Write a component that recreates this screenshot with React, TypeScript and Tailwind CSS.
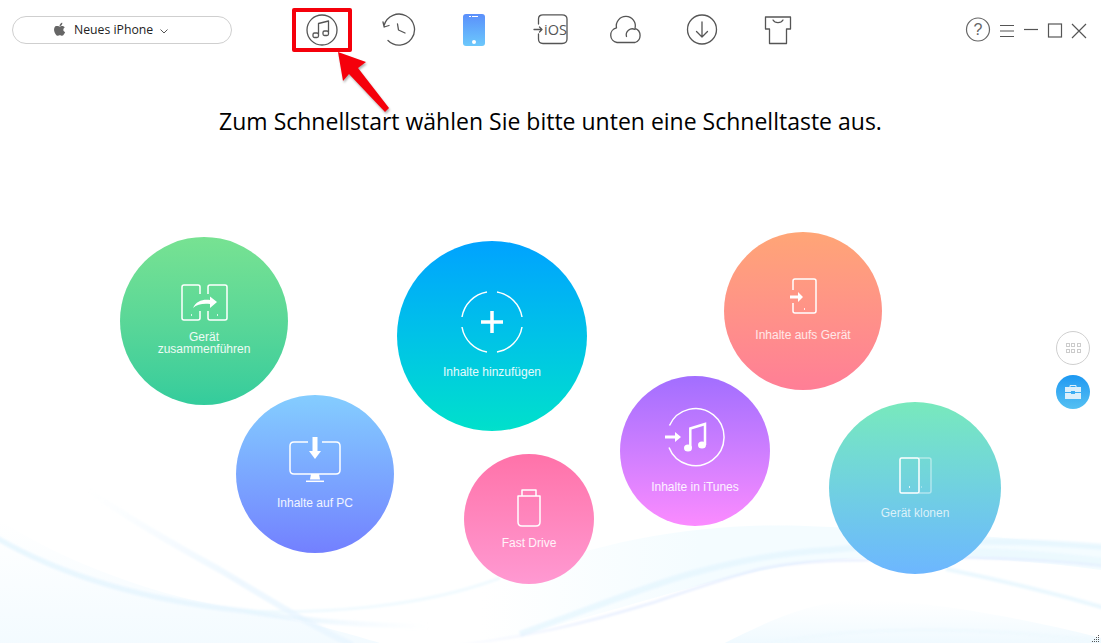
import type { ReactNode } from "react";

const font = "font-['Open_Sans','Liberation_Sans',sans-serif]";

function Waves() {
  return (
    <svg className="absolute bottom-0 left-0" width="1101" height="163" viewBox="0 480 1101 163" fill="none">
      <defs>
        <linearGradient id="fadeL" x1="0" y1="0" x2="1" y2="0">
          <stop offset="0" stopColor="#dff3fd" />
          <stop offset="0.7" stopColor="#e3f3fd" />
          <stop offset="1" stopColor="#e9f6fe" stopOpacity="0" />
        </linearGradient>
        <linearGradient id="fadeR" gradientUnits="userSpaceOnUse" x1="88" y1="490" x2="240" y2="590">
          <stop offset="0" stopColor="#e6f4fe" stopOpacity="0" />
          <stop offset="1" stopColor="#e6f4fe" />
        </linearGradient>
        <linearGradient id="fadeB" x1="0" y1="0" x2="0" y2="1">
          <stop offset="0" stopColor="#f0faff" stopOpacity="0" />
          <stop offset="1" stopColor="#eef9ff" />
        </linearGradient>
        <linearGradient id="fadeM" gradientUnits="userSpaceOnUse" x1="480" y1="0" x2="700" y2="0">
          <stop offset="0" stopColor="#f4fcff" stopOpacity="0" />
          <stop offset="1" stopColor="#f4fcff" />
        </linearGradient>
        <linearGradient id="fadeS" gradientUnits="userSpaceOnUse" x1="430" y1="0" x2="620" y2="0">
          <stop offset="0" stopColor="#dfe9fe" stopOpacity="0" />
          <stop offset="1" stopColor="#dfe9fe" />
        </linearGradient>
        <filter id="soft">
          <feGaussianBlur stdDeviation="0.800" />
        </filter>
      </defs>
      {/* pale washes */}
      <path d="M0 520 C60 560 160 600 260 612 C320 625 370 640 380 643 L0 643Z" fill="url(#fadeB)" opacity="0.700" />
      <path d="M480 590 C600 535 720 520 830 527 C930 530 1020 540 1101 546 L1101 570 C1000 556 900 555 830 560 C720 570 600 620 480 643Z" fill="url(#fadeM)" />
      <path d="M715 648 C760 625 800 605 850 600 C900 598 1000 612 1101 638 L1101 643 L715 643Z" fill="url(#fadeB)" />
      <g filter="url(#soft)">
        {/* left ribbons */}
        <path d="M-5 537 C60 575 140 600 245 611 C300 620 360 626 430 626" stroke="url(#fadeL)" strokeWidth="5" opacity="0.700" />
        <path d="M245 611 C320 614 420 608 500 578" stroke="#e6f6fe" strokeWidth="3" opacity="0.600" />
        <path d="M88 490 C130 520 180 548 220 570 C270 600 310 625 352 645" stroke="url(#fadeR)" strokeWidth="6" opacity="0.700" />
        {/* right ribbons */}
        <path d="M520 634 C600 605 650 585 690 574 C740 560 790 552 830 550 C900 543 990 537 1105 547" stroke="#e3f5fe" strokeWidth="6" opacity="0.700" />
        <path d="M430 648 C520 640 590 622 655 602 C690 590 725 578 760 569 C800 561 840 560 866 560 C920 556 1020 556 1105 566" stroke="url(#fadeS)" strokeWidth="2.500" opacity="0.700" />
        <path d="M946 569 C1000 580 1060 595 1105 608" stroke="#e6f6fe" strokeWidth="4" opacity="0.800" />
        <path d="M970 552 C1020 553 1070 558 1105 562" stroke="#e6f6fe" strokeWidth="8" opacity="0.600" />
        <path d="M760 646 C840 627 960 624 1105 642" stroke="#eff9fe" strokeWidth="3" />
      </g>
    </svg>
  );
}

function Tool({ children, on }: { children: ReactNode; on?: boolean }) {
  return (
    <div className={"flex h-[44px] w-[60px] items-center justify-center rounded-[2px] " + (on ? "border-4 border-[#f5000b]" : "")}>
      {children}
    </div>
  );
}

const ic = { fill: "none", stroke: "#555", strokeWidth: 1.3, strokeLinecap: "round", strokeLinejoin: "round" } as const;

function Toolbar() {
  return (
    <div className="flex gap-[16px]">
      <Tool on>
        <svg width="34" height="34" viewBox="0 0 34 34" {...ic}>
          <circle cx="17" cy="17" r="15" />
          <path d="M13.500 21V10.500L23.500 8V19" />
          <rect x="8" y="20" width="5.500" height="4.500" rx="1.500" />
          <rect x="18" y="18" width="5.500" height="4.500" rx="1.500" />
        </svg>
      </Tool>
      <Tool>
        <svg width="36" height="36" viewBox="0 0 36 36" {...ic}>
          <path d="M4.200 13A15.500 15.500 0 1 1 8 28.500" />
          <path d="M3 10L4.200 15L9 13.500" />
          <path d="M17.500 12L18.500 18L25 21" />
        </svg>
      </Tool>
      <Tool>
        <div className="relative h-[32px] w-[22px] rounded-[3px] bg-gradient-to-b from-[#5b8ffb] to-[#6cc8fb]">
          <div className="absolute top-[2px] left-[6px] h-[1.500px] w-[2px] bg-white" />
          <div className="absolute top-[2px] left-[9px] h-[1.500px] w-[6px] bg-white" />
          <div className="absolute bottom-[2px] left-[9px] h-[4px] w-[4px] rounded-full bg-white" />
        </div>
      </Tool>
      <Tool>
        <svg width="36" height="32" viewBox="0 0 36 32" {...ic}>
          <path d="M6.500 10V5Q6.500 .8 11 .8H30Q35 .8 35 5V25Q35 29.500 30 29.500H11Q6.500 29.500 6.500 25V20" />
          <path d="M2 15.500H10M7.500 13L10 15.500L7.500 18" />
          <text x="12" y="20.500" fontSize="14.500" fill="#555" stroke="none" fontFamily="Open Sans, sans-serif">iOS</text>
        </svg>
      </Tool>
      <Tool>
        <svg width="34" height="30" viewBox="0 0 34 30" {...ic}>
          <path d="M8 27.500A7.500 7.500 0 0 1 7.500 12.800A9.500 9.500 0 1 1 26 13.300A7.500 7.500 0 0 1 26 27.500Z" />
          <path d="M17.500 21.500A6 6 0 0 1 26 14.500" />
        </svg>
      </Tool>
      <Tool>
        <svg width="32" height="32" viewBox="0 0 32 32" {...ic}>
          <circle cx="16" cy="15.500" r="14.500" />
          <path d="M16 8V23M10.500 17.500L16 23L21.500 17.500" />
        </svg>
      </Tool>
      <Tool>
        <svg width="28" height="30" viewBox="0 0 28 30" {...ic}>
          <path d="M1.500 2H26.500V14H22.500V28.500H5.500V14H1.500Z" />
          <path d="M9 5C11 8.500 17 8.500 19 5" />
        </svg>
      </Tool>
    </div>
  );
}

function WindowButtons() {
  return (
    <svg width="122" height="28" viewBox="0 0 122 28" fill="none" stroke="#555" strokeWidth="1.200">
      <circle cx="13" cy="13.500" r="11.500" stroke="#666" />
      <text x="13" y="19" textAnchor="middle" fontSize="16" fill="#666" stroke="none" fontFamily="Liberation Sans, sans-serif">?</text>
      <path d="M35 9.500H49M35 15H49M35 20.500H49" />
      <path d="M59 13.500H73" />
      <rect x="83.500" y="8" width="13" height="13" />
      <path d="M107 8L121 22M121 8L107 22" />
    </svg>
  );
}

type BubbleProps = {
  cls: string;
  text: string[];
  icon: ReactNode;
  pad: string;
  gap: string;
  tone?: string;
};

function Bubble({ cls, text, icon, pad, gap, tone = "text-white/90" }: BubbleProps) {
  return (
    <div className={"absolute flex flex-col items-center rounded-full bg-gradient-to-b " + cls + " " + pad}>
      {icon}
      <div className={"text-center font-['Liberation_Sans',sans-serif] text-[12px] leading-[12px] " + gap + " " + tone}>
        {text.map((t) => (
          <div key={t}>{t}</div>
        ))}
      </div>
    </div>
  );
}

const w = { fill: "none", stroke: "#fff", strokeWidth: 1.500, strokeLinejoin: "round" } as const;

export default function App() {
  return (
    <div className={`relative h-[643px] w-[1101px] overflow-hidden bg-white ${font}`}>
      <Waves />

      <div className="relative flex h-[59px] items-center">
        <div className="ml-[12px] flex h-[28px] w-[220px] items-center rounded-full border border-[#cfcfcf] pt-[2px] pl-[39px] text-[12.250px] text-[#222]">
          <svg width="14" height="15" viewBox="0 0 14 16" fill="#666" className="mr-[8px] mb-[2px]">
            <path d="M11.600 8.500c0-1.800 1.500-2.700 1.600-2.800-.9-1.300-2.200-1.500-2.700-1.500-1.100-.1-2.200.7-2.800.7-.6 0-1.500-.7-2.400-.6C4 3.800 2.900 4.500 2.300 5.500 1 7.700 2 11 3.200 12.800c.6.900 1.300 1.900 2.300 1.800.9 0 1.300-.6 2.400-.6s1.400.6 2.400.6 1.600-.9 2.200-1.800c.7-1 1-2 1-2.100 0 0-1.900-.7-1.900-2.200zM9.800 3.100c.5-.6.900-1.500.8-2.300-.8 0-1.700.5-2.200 1.200-.5.500-.9 1.400-.8 2.200.8.100 1.700-.4 2.200-1.100z" />
          </svg>
          <span>Neues iPhone</span>
          <svg width="8" height="5" viewBox="0 0 8 5" fill="none" stroke="#555" className="ml-[7px] mt-[2px]">
            <path d="M.5.500L4 4L7.500.500" />
          </svg>
        </div>
        <div className="ml-[60px]">
          <Toolbar />
        </div>
        <div className="ml-auto mr-[14px]">
          <WindowButtons />
        </div>
      </div>

      <h1 className="relative mt-[44px] text-center text-[23px] leading-[36px] font-normal text-black">
        Zum Schnellstart wählen Sie bitte unten eine Schnelltaste aus.
      </h1>

      {/* arrow over the toolbar */}
      <svg className="absolute top-[50px] left-[330px] drop-shadow-[1px_2px_1px_rgba(0,0,0,0.3)]" width="64" height="66" viewBox="0 0 64 66">
        <path d="M8 2L36 12L28 18L59 58L55 62L19 24L13 31Z" fill="#f5000b" />
      </svg>

      <Bubble
        cls="left-[120px] top-[237px] h-[168px] w-[168px] from-[#77e292] to-[#33cc9c]"
        pad="pt-[47px]"
        gap="mt-[10px]"
        text={["Gerät", "zusammenführen"]}
        icon={
          <svg width="47" height="37" viewBox="0 0 47 37" {...w}>
            <path d="M19 10V3Q19 1 17 1H3Q1 1 1 3V34Q1 36 3 36H17Q19 36 19 34V27" />
            <path d="M27 10V3Q27 1 29 1H44Q46 1 46 3V34Q46 36 44 36H29Q27 36 27 34V27" />
            <path d="M12 24C15 17 22 15 29 16V12.500L36 18L29 24V20C22 19.500 16 20 12 24Z" fill="#fff" stroke="none" />
            <path d="M10 31H11M36 31H37" />
          </svg>
        }
      />
      <Bubble
        cls="left-[236px] top-[395px] h-[158px] w-[158px] from-[#84cdff] to-[#7380ff]"
        pad="pt-[42px]"
        gap="mt-[14px]"
        text={["Inhalte auf PC"]}
        icon={
          <svg width="52" height="46" viewBox="0 0 52 46" {...w}>
            <path d="M19 5H5Q1 5 1 9V33Q1 37 5 37H47Q51 37 51 33V9Q51 5 47 5H33" />
            <path d="M23.500 0H28.500V14H32L26 22L20 14H23.500Z" fill="#fff" stroke="none" />
            <path d="M22 37H30L31 42.500H21Z" fill="#fff" stroke="none" />
            <path d="M17 44.300H35" />
          </svg>
        }
      />
      <Bubble
        cls="left-[397px] top-[241px] h-[190px] w-[190px] from-[#01a2ff] to-[#03e0cb]"
        pad="pt-[49px]"
        gap="mt-[12px]"
        text={["Inhalte hinzufügen"]}
        icon={
          <svg width="64" height="64" viewBox="0 0 64 64" fill="none" stroke="#fff" strokeWidth="1.500">
            <path d="M27 2A30.500 30.500 0 0 0 2 27M37 2A30.500 30.500 0 0 1 62 27M2 37A30.500 30.500 0 0 0 27 62M62 37A30.500 30.500 0 0 1 37 62" />
            <path d="M32 21V43M21 32H43" strokeWidth="3.500" />
          </svg>
        }
      />
      <Bubble
        cls="left-[464px] top-[454px] h-[130px] w-[130px] from-[#ff72a9] to-[#ff99d2]"
        pad="pt-[35px]"
        gap="mt-[10px]"
        text={["Fast Drive"]}
        icon={
          <svg width="24" height="38" viewBox="0 0 24 38" {...w}>
            <path d="M1 7H23V33Q23 37 19 37H5Q1 37 1 33Z" />
            <path d="M5 7V1H19V7" />
          </svg>
        }
      />
      <Bubble
        cls="left-[620px] top-[376px] h-[150px] w-[150px] from-[#a26eff] to-[#fb8bff]"
        pad="pt-[31px]"
        gap="mt-[14px]"
        text={["Inhalte in iTunes"]}
        icon={
          <svg width="62" height="60" viewBox="0 0 62 60" fill="none" stroke="#fff" strokeWidth="1.500">
            <path d="M5.500 18.500A28.500 28.500 0 1 1 5 40.500" />
            <path d="M1 28.500H11V25L17 30L11 35V31.500H1Z" fill="#fff" stroke="none" />
            <path d="M26.300 41V21.500L41 17V38" strokeWidth="2.500" />
            <ellipse cx="24" cy="41" rx="4" ry="3.500" fill="#fff" stroke="none" />
            <ellipse cx="38" cy="38" rx="4" ry="3.500" fill="#fff" stroke="none" />
          </svg>
        }
      />
      <Bubble
        cls="left-[724px] top-[232px] h-[158px] w-[158px] from-[#ffa576] to-[#ff7e96]"
        pad="pt-[46px]"
        gap="mt-[15px]"
        tone="text-white/80"
        text={["Inhalte aufs Gerät"]}
        icon={
          <svg width="28" height="36" viewBox="0 0 28 36" {...w}>
            <path d="M4 12V3Q4 1 6 1H25Q27 1 27 3V33Q27 35 25 35H6Q4 35 4 33V25" />
            <path d="M1 17.500H9V14L14 19L9 24V20.500H1Z" fill="#fff" stroke="none" />
            <path d="M15 31H16" />
          </svg>
        }
      />
      <Bubble
        cls="left-[829px] top-[402px] h-[172px] w-[172px] from-[#78e9bc] to-[#6db6ff]"
        pad="pt-[55px]"
        gap="mt-[13px]"
        tone="text-white/75"
        text={["Gerät klonen"]}
        icon={
          <svg width="33" height="37" viewBox="0 0 33 37" {...w}>
            <path d="M20 1H30Q32 1 32 3V34Q32 36 30 36H20" opacity="0.450" />
            <rect x="1" y="1" width="19" height="35" rx="1.500" />
            <path d="M10 30H11" />
            <path d="M22 30H23" opacity="0.450" />
          </svg>
        }
      />

      <div className="absolute top-[331px] right-[11px] flex flex-col gap-[10px]">
        <div className="flex h-[34px] w-[34px] items-center justify-center rounded-full border border-[#cfcfcf] bg-white">
          <div className="grid grid-cols-3 gap-[1.500px]">
            {[0, 1, 2, 3, 4, 5].map((n) => (
              <div key={n} className="h-[4px] w-[4px] border border-[#ccc]" />
            ))}
          </div>
        </div>
        <div className="flex h-[34px] w-[34px] items-center justify-center rounded-full bg-gradient-to-b from-[#1b98f2] to-[#54c0f2]">
          <svg width="16" height="14" viewBox="0 0 16 14">
            <path d="M5 2V.5H11V2" fill="none" stroke="#dbeffb" />
            <path d="M0 2H16V7H10V6H6V7H0ZM0 8H6V9H10V8H16V14H0Z" fill="#dbeffb" />
          </svg>
        </div>
      </div>

      {/* window resize grip */}
      <svg className="absolute right-[1px] bottom-0" width="10" height="8" viewBox="0 0 10 8" fill="#555">
        <rect x="8" y="0" width="1" height="1" />
        <rect x="6" y="2" width="1" height="1" />
        <rect x="8" y="2" width="1" height="1" />
        <rect x="4" y="4" width="1" height="1" />
        <rect x="6" y="4" width="1" height="1" />
        <rect x="8" y="4" width="1" height="1" />
        <rect x="2" y="6" width="1" height="1" />
        <rect x="4" y="6" width="1" height="1" />
        <rect x="6" y="6" width="1" height="1" />
        <rect x="8" y="6" width="1" height="1" />
      </svg>
    </div>
  );
}
